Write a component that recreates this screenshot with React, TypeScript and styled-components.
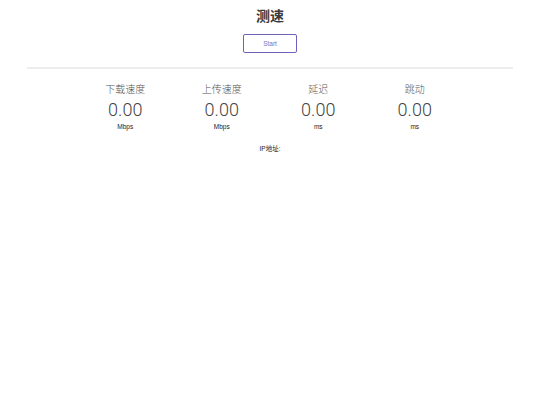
import React from 'react';
import styled, { createGlobalStyle } from 'styled-components';

const GlobalStyle = createGlobalStyle`
  html, body {
    margin: 0;
    padding: 0;
    background: #ffffff;
    font-family: "Liberation Sans", Arial, "Noto Sans CJK SC", sans-serif;
  }
`;

const Page = styled.div`
  display: flex;
  flex-direction: column;
  align-items: center;
  padding-top: 8px;
`;

const Title = styled.h1`
  margin: 0;
  font-size: 14px;
  line-height: 17px;
  font-weight: bold;
  color: #3a3a3a;
`;

const StartButton = styled.button`
  margin-top: 9px;
  width: 54px;
  height: 19px;
  padding: 0;
  background: #ffffff;
  border: 1px solid #6d62b8;
  border-radius: 2px;
  color: #7a70b8;
  font-family: "Liberation Sans", Arial, sans-serif;
  font-size: 6.5px;
  cursor: pointer;
`;

const Divider = styled.hr`
  margin: 14px 0 0;
  width: 486px;
  height: 2px;
  border: none;
  background: #ededed;
`;

const Stats = styled.div`
  margin-top: 15px;
  width: 386px;
  display: grid;
  grid-template-columns: repeat(4, 1fr);
`;

const Stat = styled.div`
  display: flex;
  flex-direction: column;
  align-items: center;
`;

const Label = styled.div`
  font-size: 10px;
  line-height: 12px;
  font-weight: 300;
  color: #555555;
`;

const Value = styled.div`
  margin-top: 4px;
  font-family: Roboto, "Liberation Sans", sans-serif;
  font-size: 18px;
  line-height: 20px;
  font-weight: 300;
  color: #444444;
`;

const Unit = styled.div`
  margin-top: 2px;
  font-size: 6.5px;
  line-height: 9px;
  color: #222222;
`;

const IpLine = styled.div`
  margin-top: 14px;
  font-size: 6.5px;
  line-height: 8px;
  color: #222222;
`;

const stats = [
  { label: '下载速度', value: '0.00', unit: 'Mbps' },
  { label: '上传速度', value: '0.00', unit: 'Mbps' },
  { label: '延迟', value: '0.00', unit: 'ms' },
  { label: '跳动', value: '0.00', unit: 'ms' },
];

export default function App() {
  return (
    <>
      <GlobalStyle />
      <Page>
        <Title>测速</Title>
        <StartButton>Start</StartButton>
        <Divider />
        <Stats>
          {stats.map((s, i) => (
            <Stat key={i}>
              <Label>{s.label}</Label>
              <Value>{s.value}</Value>
              <Unit>{s.unit}</Unit>
            </Stat>
          ))}
        </Stats>
        <IpLine>IP地址:</IpLine>
      </Page>
    </>
  );
}
